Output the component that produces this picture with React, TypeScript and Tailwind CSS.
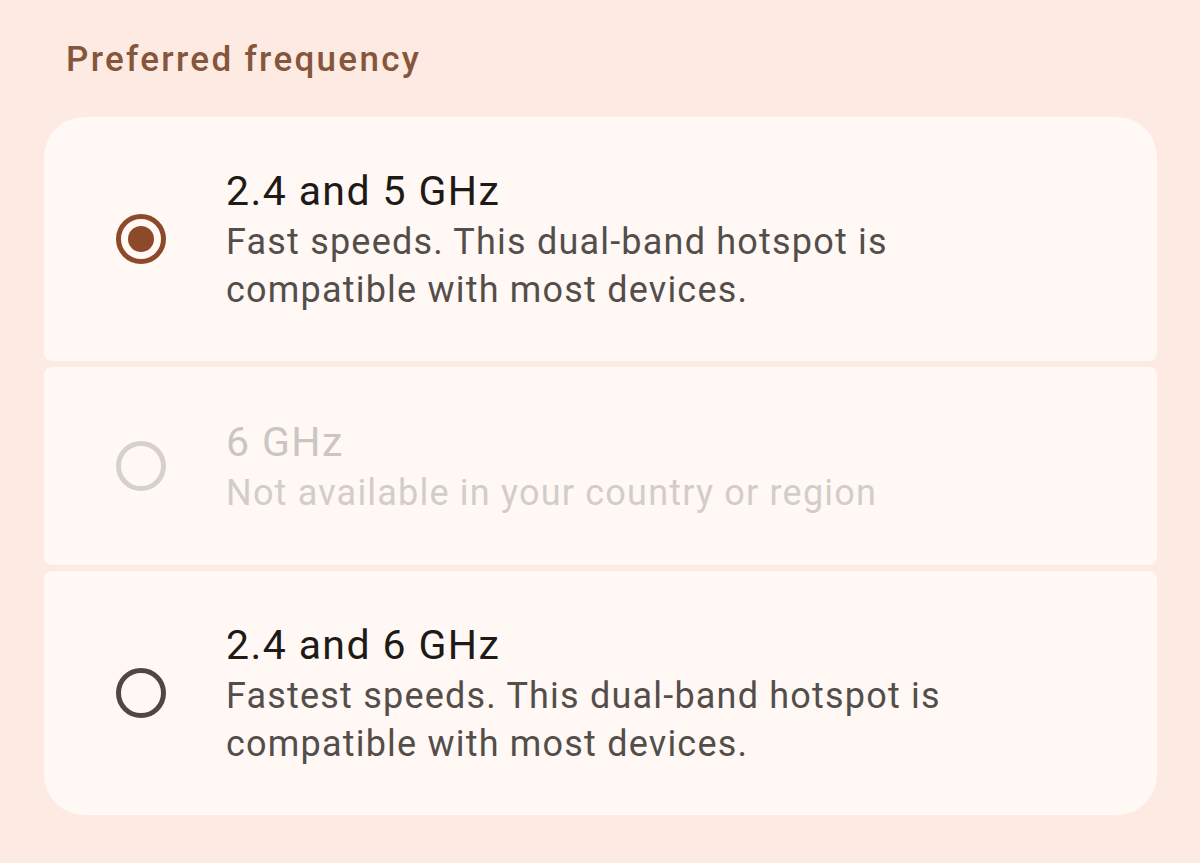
import { useState } from 'react';

type Option = {
  id: string;
  title: string;
  description: string[];
  disabled?: boolean;
};

const options: Option[] = [
  {
    id: 'dual5',
    title: '2.4 and 5 GHz',
    description: ['Fast speeds. This dual-band hotspot is', 'compatible with most devices.'],
  },
  {
    id: 'six',
    title: '6 GHz',
    description: ['Not available in your country or region'],
    disabled: true,
  },
  {
    id: 'dual6',
    title: '2.4 and 6 GHz',
    description: ['Fastest speeds. This dual-band hotspot is', 'compatible with most devices.'],
  },
];

function Radio({ checked, disabled }: { checked: boolean; disabled?: boolean }) {
  const ring = disabled ? 'border-[#d6d1cf]' : checked ? 'border-[#8c4a2b]' : 'border-[#4e4744]';
  return (
    <div className={`w-[50px] h-[50px] rounded-full border-[5px] ${ring} flex items-center justify-center shrink-0`}>
      {checked && <div className="w-[26px] h-[26px] rounded-full bg-[#8c4a2b]" />}
    </div>
  );
}

export default function App() {
  const [selected, setSelected] = useState('dual5');

  return (
    <div
      className="min-h-screen w-full bg-[#fdeae2] pt-[37px] px-[44px]"
      style={{ fontFamily: 'Roboto, "Noto Sans", sans-serif' }}
    >
      <h2 className="pl-[22px] text-[35px] leading-[46px] font-medium tracking-[2.3px] text-[#85563b]">
        Preferred frequency
      </h2>

      <div className="mt-[34px] w-[1113px] flex flex-col gap-[6px]">
        {options.map((opt, i) => {
          const first = i === 0;
          const last = i === options.length - 1;
          const corners = first
            ? 'rounded-t-[40px] rounded-b-[8px]'
            : last
            ? 'rounded-b-[40px] rounded-t-[8px]'
            : 'rounded-[8px]';
          const height = opt.disabled ? 'h-[198px]' : 'h-[244px]';
          return (
            <button
              key={opt.id}
              onClick={() => !opt.disabled && setSelected(opt.id)}
              className={`${corners} ${height} bg-[#fff8f5] flex items-center text-left pl-[72px]`}
            >
              <Radio checked={selected === opt.id} disabled={opt.disabled} />
              <div className="ml-[60px] flex flex-col">
                <span
                  className={`text-[41px] leading-[54px] tracking-[1.4px] ${opt.disabled ? 'text-[#cbc6c4]' : 'text-[#201a17]'}`}
                >
                  {opt.title}
                </span>
                {opt.description.map(line => (
                  <span
                    key={line}
                    className={`text-[36px] leading-[48px] tracking-[1.2px] ${opt.disabled ? 'text-[#d2cdcb]' : 'text-[#544e4b]'}`}
                  >
                    {line}
                  </span>
                ))}
              </div>
            </button>
          );
        })}
      </div>
    </div>
  );
}
